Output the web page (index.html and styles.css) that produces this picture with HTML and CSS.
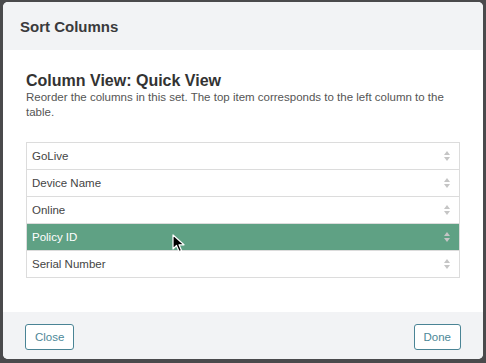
FILE: index.html
```html
<!DOCTYPE html>
<html lang="en">
<head>
    <meta charset="UTF-8">
    <title>Sort Columns</title>
    <link rel="stylesheet" href="styles.css">
</head>
<body>
<div class="backdrop">
    <!-- Sort Columns Modal -->
    <div class="modal">
        <div class="modal-header">
            <h2>Sort Columns</h2>
        </div>
        <div class="modal-body">
            <h3>Column View: Quick View</h3>
            <p>Reorder the columns in this set. The top item corresponds to the left column to the table.</p>
            <ul class="sort-list">
                <li><span>GoLive</span><span class="handle"></span></li>
                <li><span>Device Name</span><span class="handle"></span></li>
                <li><span>Online</span><span class="handle"></span></li>
                <li class="active">
                    <span>Policy ID</span><span class="handle"></span>
                    <svg class="cursor" width="14" height="20" viewBox="0 0 14 20">
                        <path d="M1 1 L1 15 L4.5 11.5 L7 17.5 L9.5 16.5 L7 10.8 L12 10.8 Z" fill="#000" stroke="#fff" stroke-width="1.2" stroke-linejoin="round"/>
                    </svg>
                </li>
                <li><span>Serial Number</span><span class="handle"></span></li>
            </ul>
        </div>
        <div class="modal-footer">
            <button class="btn-outline">Close</button>
            <button class="btn-outline">Done</button>
        </div>
    </div>
</div>
</body>
</html>
```

FILE: styles.css
```css
/* General Page Styling */
body {
    font-family: 'Liberation Sans', Arial, sans-serif;
    margin: 0;
    padding: 0;
    background-color: #4a4a4c;
}

.backdrop {
    padding: 2px 3px 4px 3px;
    height: 363px;
    box-sizing: border-box;
}

/* Modal */
.modal {
    background-color: #fff;
    border-radius: 5px;
    overflow: hidden;
    height: 100%;
    display: flex;
    flex-direction: column;
}

.modal-header {
    background-color: #f2f3f5;
    height: 48px;
    padding: 0 17px;
    display: flex;
    align-items: center;
}

.modal-header h2 {
    margin: 0;
    font-size: 15px;
    color: #3a3a3c;
}

.modal-body {
    flex: 1;
    padding: 22px 23px 0 23px;
}

.modal-body h3 {
    margin: 0;
    font-size: 16px;
    color: #333;
    line-height: 18px;
}

.modal-body p {
    margin: 0 0 22px 0;
    font-size: 11.5px;
    line-height: 15px;
    color: #555;
}

/* Sortable List */
.sort-list {
    list-style: none;
    margin: 0;
    padding: 0;
    border: 1px solid #dcdcdc;
    border-bottom: none;
}

.sort-list li {
    position: relative;
    height: 26px;
    border-bottom: 1px solid #dcdcdc;
    display: flex;
    align-items: center;
    justify-content: space-between;
    padding: 0 8px 0 5px;
    font-size: 11.5px;
    color: #444;
}

.sort-list li.active {
    background-color: #5fa184;
    color: #fff;
}

.handle {
    width: 7px;
    height: 10px;
    position: relative;
}

.handle::before, .handle::after {
    content: "";
    position: absolute;
    left: 0;
    border-left: 3.5px solid transparent;
    border-right: 3.5px solid transparent;
}

.handle::before {
    top: 0;
    border-bottom: 4px solid #c5c5c5;
}

.handle::after {
    bottom: 0;
    border-top: 4px solid #c5c5c5;
}

.cursor {
    position: absolute;
    left: 145px;
    top: 10px;
}

/* Footer */
.modal-footer {
    background-color: #f2f3f5;
    height: 47px;
    padding: 0 22px;
    display: flex;
    align-items: center;
    justify-content: space-between;
}

.btn-outline {
    font-family: 'Liberation Sans', Arial, sans-serif;
    background: #fff;
    border: 1px solid #4a8495;
    border-radius: 3px;
    color: #4d8898;
    font-size: 11.5px;
    height: 26px;
    padding: 0 9px;
    margin-top: 2px;
}
```
